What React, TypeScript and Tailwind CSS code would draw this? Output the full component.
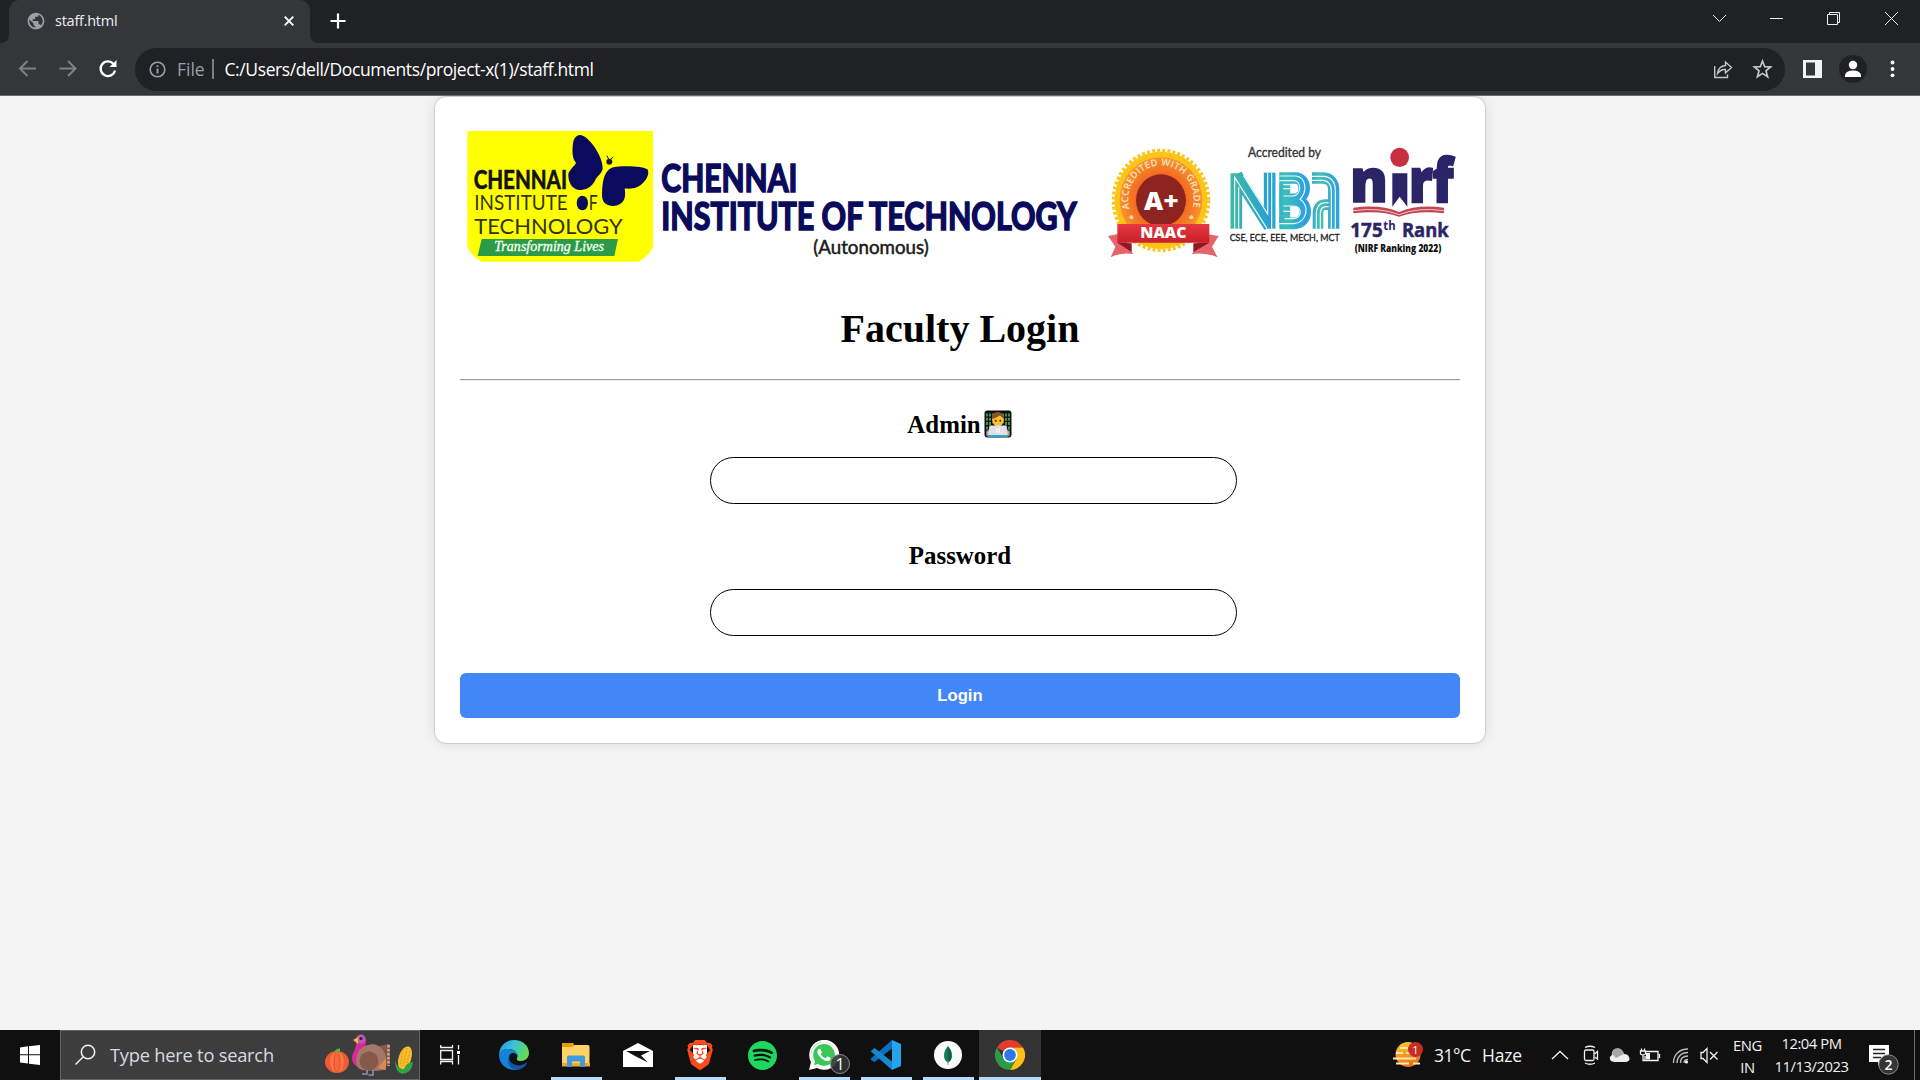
import type { ReactNode } from "react";
import { SiBrave, SiSpotify } from "react-icons/si";
import { FaWhatsapp } from "react-icons/fa";
import { MdPublic } from "react-icons/md";

type LabelProps = {
  x: number;
  y: number;
  w: number;
  size: number;
  children: ReactNode;
  fill?: string;
  weight?: number;
  font?: string;
  italic?: boolean;
  stroke?: number;
};

function Label({ x, y, w, size, children, fill = "#111", weight = 400, font = "Lato, sans-serif", italic, stroke = 0 }: LabelProps) {
  return (
    <text
      x={x}
      y={y}
      textLength={w}
      lengthAdjust="spacingAndGlyphs"
      fontSize={size}
      fontWeight={weight}
      fontFamily={font}
      fontStyle={italic ? "italic" : "normal"}
      fill={fill}
      stroke={stroke ? fill : "none"}
      strokeWidth={stroke}
    >
      {children}
    </text>
  );
}

function Banner() {
  return (
    <svg className="block h-[160px] w-[1000px]" viewBox="460 122 1000 160">
      <defs>
        <linearGradient id="nba" gradientUnits="userSpaceOnUse" x1="420" y1="0" x2="750" y2="0">
          <stop offset="0" stopColor="#42b89f" />
          <stop offset="0.38" stopColor="#279fd8" />
          <stop offset="0.5" stopColor="#3cbfbb" />
          <stop offset="0.7" stopColor="#2b9fe0" />
          <stop offset="0.82" stopColor="#4abfb0" />
          <stop offset="1" stopColor="#2a9ee2" />
        </linearGradient>
        <radialGradient id="seal">
          <stop offset="0.6" stopColor="#f26a21" />
          <stop offset="1" stopColor="#f8932c" />
        </radialGradient>
        <linearGradient id="ribbon" x1="0" y1="0" x2="0" y2="1">
          <stop offset="0" stopColor="#e6383d" />
          <stop offset="1" stopColor="#c9202b" />
        </linearGradient>
      </defs>

      <g transform="translate(430 90) scale(0.33333)">
        <path d="M112 123H669V472Q650 505 625 515H155Q125 500 112 470Z" fill="#ffff00" />
        <path d="M450 135C475 135 520 200 518 236C515 252 500 258 495 272C485 292 465 300 448 300C425 298 414 275 415 252C420 235 435 228 438 218C425 205 427 180 429 160C431 146 438 136 450 135Z" fill="#0a0a5e" />
        <path d="M545 233C575 225 640 228 652 238C663 255 640 285 620 292C605 298 592 295 584 296C590 325 580 345 550 348C525 348 515 335 516 310C517 280 520 245 545 233Z" fill="#0a0a5e" />
        <circle cx="538" cy="215" r="9" fill="#1b1b20" />
        <path d="M536 208L531 197M541 208L550 201" stroke="#1b1b20" strokeWidth="3" />
        <Label x={131} y={296} w={280} size={79} weight={700} stroke={2}>CHENNAI</Label>
        <Label x={133} y={360} w={280} size={61} fill="#33330a">INSTITUTE</Label>
        <ellipse cx="457" cy="339" rx="17" ry="22" fill="#0a0a5e" />
        <Label x={476} y={360} w={27} size={61} fill="#33330a">F</Label>
        <Label x={133} y={433} w={445} size={61} fill="#33330a">TECHNOLOGY</Label>
        <path d="M155 447H564L553 498H143Z" fill="#2c9b48" />
        <Label x={193} y={483} w={329} size={42} fill="#f4fff0" italic font="'Liberation Serif', serif" stroke={1}>Transforming Lives</Label>
      </g>

      <g transform="translate(640 130) scale(0.33333)">
        <Label x={64} y={185} w={408} size={113} weight={700} fill="#0b0b5c" stroke={5}>CHENNAI</Label>
        <Label x={64} y={300} w={1246} size={113} weight={700} fill="#0b0b5c" stroke={5}>INSTITUTE OF TECHNOLOGY</Label>
        <Label x={520} y={371} w={346} size={56} fill="#1a1a1a" stroke={1.5}>(Autonomous)</Label>
      </g>

      <g transform="translate(1090 130) scale(0.33333)">
        <ellipse cx="213" cy="211" rx="139" ry="146" fill="#fcc419" />
        <ellipse cx="213" cy="211" rx="143" ry="150" fill="none" stroke="#fbc61c" strokeWidth="10" strokeDasharray="9 6.4" />
        <ellipse cx="213" cy="210" rx="124" ry="128" fill="url(#seal)" />
        <ellipse cx="213" cy="211" rx="75" ry="78" fill="#8e2420" />
        <path id="sealArc" d="M122 246A98 102 0 1 1 304 246" fill="none" />
        <text fontFamily="'Open Sans', sans-serif" fontSize="28" fontWeight="600" fill="#ffe7c4">
          <textPath href="#sealArc" startOffset="10" textLength="366" lengthAdjust="spacing">ACCREDITED WITH GRADE</textPath>
        </text>
        <circle cx="124" cy="262" r="6" fill="#ffd9a8" />
        <circle cx="304" cy="262" r="6" fill="#ffd9a8" />
        <Label x={162} y={240} w={104} size={76} weight={800} fill="#fff" font="'Open Sans', sans-serif">A+</Label>
        <path d="M54 318L95 310L125 366L130 372Q90 366 62 382L76 350Z" fill="#e4646a" />
        <path d="M386 318L335 310L310 366L305 372Q350 366 383 382L366 350Z" fill="#e4646a" />
        <path d="M82 338L125 340V366ZM358 338L310 340V366Z" fill="#8f1820" />
        <path d="M82 282H358V338H82Z" fill="url(#ribbon)" />
        <Label x={151} y={325} w={138} size={47} weight={800} fill="#fff" font="'Open Sans', sans-serif">NAAC</Label>

        <Label x={474} y={81} w={219} size={38} fill="#333" stroke={1}>Accredited by</Label>
        <g fill="none" stroke="url(#nba)" strokeLinejoin="miter">
          <path d="M439 296V130" strokeWidth="35" />
          <path d="M539 128V296" strokeWidth="35" />
          <path d="M439 134L539 290" strokeWidth="36" />
          <path d="M568 144H616C652 144 652 208 612 208H568M568 212H618C656 214 656 280 612 280H568" strokeWidth="35" />
          <path d="M584 160V280" strokeWidth="33" />
          <path d="M666 144H700Q731 146 731 180V296" strokeWidth="34" />
          <path d="M720 224H706Q684 224 684 250V296" strokeWidth="32" />
        </g>
        <g fill="none" stroke="#eefcff" strokeWidth="3.500">
          <path d="M434 296V142L531 296M446 296V172M533 128V252L460 136M545 128V296" />
          <path d="M568 138H618C650 142 652 186 630 208C660 224 652 278 612 281H568M568 152H612C635 154 635 194 610 198H580M580 176H604M580 164H606M580 228H612C638 232 636 264 610 266H584M580 244H608" />
          <path d="M666 139H702Q736 143 736 182V296M666 151H700Q724 154 724 184V296M716 218H704Q679 220 679 252V296M716 230H706Q691 232 691 252V296" />
        </g>
        <Label x={419} y={333} w={330} size={31} fill="#222" stroke={1}>CSE, ECE, EEE, MECH, MCT</Label>

        <Label x={780} y={216} w={114} size={180} weight={800} fill="#2b2568" font="'Open Sans', sans-serif" stroke={5}>n</Label>
        <path d="M907 130H952V230L929 200L907 230Z" fill="#2b2568" />
        <Label x={958} y={216} w={132} size={180} weight={800} fill="#2b2568" font="'Open Sans', sans-serif" stroke={7}>rf</Label>
        <ellipse cx="929" cy="82" rx="28" ry="29" fill="#c9303f" />
        <path d="M790 233Q870 222 927 246Q985 222 1062 233V250Q985 240 927 260Q870 240 790 250Z" fill="#c34653" />
        <path d="M790 242Q870 231 927 254Q985 231 1062 242" fill="none" stroke="#f2c6cb" strokeWidth="3" />
        <Label x={781} y={321} w={97} size={60} weight={700} fill="#2b2568" font="'Open Sans', sans-serif" stroke={1.5}>175</Label>
        <Label x={880} y={301} w={37} size={36} weight={700} fill="#2b2568" font="'Open Sans', sans-serif">th</Label>
        <Label x={936} y={321} w={140} size={60} weight={700} fill="#2b2568" font="'Open Sans', sans-serif" stroke={1.5}>Rank</Label>
        <Label x={794} y={366} w={260} size={30} weight={800} font="'Open Sans', sans-serif">(NIRF Ranking 2022)</Label>
      </g>
    </svg>
  );
}

function TechnologistEmoji() {
  return (
    <svg className="ml-[3px] h-[28px] w-[28px]" viewBox="0 0 28 28">
      <rect x="0.500" y="0.500" width="27" height="27" rx="3" fill="#0c0f0c" />
      <path d="M3 3.500v22M6 3.500v22M9 3.500v10M19 3.500v10M22 3.500v22M25 3.500v22" stroke="#4fa85c" strokeWidth="1.700" strokeDasharray="3 1.300" />
      <path d="M2 25Q2 19 8 18H20Q26 19 26 25Q25 27 23 27H5Q3 27 2 25Z" fill="#8f6bd9" />
      <ellipse cx="14" cy="10" rx="5.800" ry="6.500" fill="#fcbf2e" />
      <path d="M8 9Q7 2 14 2Q21 3 20 9Q18 7 16 5.500Q12 8 8 9Z" fill="#8a5028" />
      <circle cx="11.700" cy="10.700" r="1" fill="#442b1c" />
      <circle cx="16.300" cy="10.700" r="1" fill="#442b1c" />
      <circle cx="5" cy="23" r="2" fill="#fcbf2e" />
      <circle cx="23" cy="23" r="2" fill="#fcbf2e" />
      <path d="M5.500 15.500H22.500L23.500 25.500H4.500Z" fill="#dfe1e6" />
      <path d="M4.500 25H23.500V27H4.500Z" fill="#21a9d6" />
      <path d="M12 18.500h1.700v1.700H12zM14.300 18.500H16v1.700h-1.700zM12 20.800h1.700v1.700H12zM14.300 20.800H16v1.700h-1.700z" fill="#f8f8fa" />
    </svg>
  );
}

function TabStrip() {
  return (
    <div className="flex h-[43px] bg-[#202124]">
      <div className="flex w-[9px] items-end">
        <svg className="h-[9px] w-[9px]" viewBox="0 0 9 9">
          <path d="M0 9Q9 9 9 0V9Z" fill="#35363a" />
        </svg>
      </div>
      <div className="flex h-[43px] w-[301px] items-center rounded-t-[10px] bg-[#35363a] pb-px pl-[17px]">
        <MdPublic className="h-[20px] w-[20px] text-[#9aa0a6]" />
        <span className="ml-[9px] w-[64px] font-['Open_Sans',sans-serif] text-[14.500px] tracking-[-0.250px] whitespace-nowrap text-[#eceef0]">
          staff.html
        </span>
        <svg className="ml-[165px] h-[10px] w-[10px]" viewBox="0 0 10 10">
          <path d="M0.700 0.700L9.300 9.300M9.300 0.700L0.700 9.300" stroke="#fff" strokeWidth="1.900" />
        </svg>
      </div>
      <div className="flex w-[10px] items-end">
        <svg className="h-[9px] w-[9px]" viewBox="0 0 9 9">
          <path d="M9 9Q0 9 0 0V9Z" fill="#35363a" />
        </svg>
      </div>
      <svg className="mt-[13px] ml-[9.500px] h-[16px] w-[16px]" viewBox="0 0 16 16">
        <path d="M8 .5V15.500M.5 8H15.500" stroke="#fff" strokeWidth="2.200" />
      </svg>
      <svg className="ml-auto h-[38px] w-[229px]" viewBox="0 0 229 38" fill="none" stroke="#f0f0f0" strokeWidth="1">
        <path d="M22 15L28.500 21.500L35 15" />
        <path d="M79 18.500H92" />
        <path d="M136.500 14.500H146.500V24.500H136.500ZM138.500 14.500V12.500H148.500V22.500H146.500" />
        <path d="M194 12L207 25M207 12L194 25" />
      </svg>
    </div>
  );
}

function Toolbar() {
  return (
    <div className="flex h-[53px] items-center border-b border-[#68696c] bg-[#35363a]">
      <svg className="h-[52px] w-[135px] shrink-0" viewBox="0 0 135 52" fill="none" strokeWidth="2">
        <path d="M36 25.500H20.500M27.500 18L20 25.500L27.500 33" stroke="#7e8084" />
        <path d="M59.500 25.500H75M68 18L75.500 25.500L68 33" stroke="#7e8084" />
        <path d="M113.500 21A7.300 7.300 0 1 0 115 27.500" stroke="#fff" strokeWidth="2.300" />
        <path d="M116.500 17V24H109.500Z" fill="#fff" />
      </svg>
      <div className="flex h-[43px] w-[1650px] items-center rounded-full bg-[#202124] pl-[14px] font-['Open_Sans',sans-serif] text-[17.500px]">
        <svg className="h-[17px] w-[17px]" viewBox="0 0 17 17" fill="none" stroke="#9aa0a6" strokeWidth="1.600">
          <circle cx="8.500" cy="8.500" r="7.300" />
          <path d="M8.500 7.500V12.500M8.500 4.300V6" strokeWidth="1.900" />
        </svg>
        <span className="ml-[11px] w-[27px] text-[#9aa0a6]">File</span>
        <span className="ml-[8px] h-5 w-[1.500px] bg-[#7b7e83]" />
        <span className="ml-[11px] tracking-[-0.400px] whitespace-nowrap text-white">
          C:/Users/dell/Documents/project-x(1)/staff.html
        </span>
        <svg className="mr-[12px] ml-auto h-[22px] w-[60px]" viewBox="0 0 60 22" fill="none" stroke="#c4c7ca" strokeWidth="1.400">
          <path d="M1.700 8V19.500H14.500V16.500M4.500 15.500Q5.500 8 12.500 7.500V4L18.500 9.500L12.500 15V11.500Q8 11 4.500 15.500Z" />
          <path d="M49.500 3L51.700 8.700L57.600 9L53 12.900L54.600 18.700L49.500 15.400L44.400 18.700L46 12.900L41.400 9L47.300 8.700Z" strokeWidth="1.700" />
        </svg>
      </div>
      <svg className="h-[52px] w-[135px] shrink-0" viewBox="1785 43 135 52">
        <path d="M1803 60H1822V78H1803ZM1806 62.500V75.500H1815V62.500Z" fill="#f1f3f4" fillRule="evenodd" />
        <circle cx="1853" cy="69" r="14" fill="#202124" />
        <circle cx="1853" cy="65" r="4.200" fill="#fff" />
        <path d="M1845 77V75Q1846 70.500 1853 70.500T1861 75V77Z" fill="#fff" />
        <circle cx="1892.500" cy="62.500" r="1.900" fill="#fff" />
        <circle cx="1892.500" cy="69" r="1.900" fill="#fff" />
        <circle cx="1892.500" cy="75.300" r="1.900" fill="#fff" />
      </svg>
    </div>
  );
}

function LoginCard() {
  return (
    <form className="mx-auto flex h-[648px] w-[1052px] flex-col rounded-[12px] border border-[#ccc] bg-white px-[25px] pt-[25px] font-['Liberation_Serif',serif] text-black shadow-[0_0_12px_rgba(0,0,0,0.1)]">
      <Banner />
      <h1 className="mt-[24px] text-center text-[40px] leading-[46px] font-bold">Faculty Login</h1>
      <hr className="mt-[27px] h-[2px] border-t border-b border-t-[#9a9a9a] border-b-[#eee]" />
      <h3 className="mt-[29px] flex h-[28px] items-center justify-center pr-[1px] text-[24.900px] font-bold">
        <span className="pt-[2px]">Admin</span>
        <TechnologistEmoji />
      </h3>
      <input className="mt-[19px] ml-[250px] h-[47px] w-[527px] rounded-[25px] border border-black px-5 outline-none" />
      <h3 className="mt-[38px] text-center text-[24.900px] leading-[28px] font-bold">Password</h3>
      <input type="password" className="mt-[19px] ml-[250px] h-[47px] w-[527px] rounded-[25px] border border-black px-5 outline-none" />
      <button type="button" className="mt-[37px] h-[45px] w-[1000px] rounded-[6px] bg-[#4287f5] font-['Liberation_Sans',sans-serif] text-[16.670px] font-bold text-white">
        Login
      </button>
    </form>
  );
}

function SearchBox() {
  return (
    <div className="flex h-[50px] w-[360px] items-center border border-[#656565] bg-[#3d3d3d]">
      <svg className="ml-[14px] h-[22px] w-[22px] shrink-0" viewBox="0 0 22 22" fill="none" stroke="#f2f2f2" strokeWidth="1.500">
        <circle cx="13" cy="8" r="6.700" />
        <path d="M8 13L.5 20.500" />
      </svg>
      <span className="ml-[13px] w-[166px] shrink-0 font-['Open_Sans',sans-serif] text-[18.300px] tracking-[-0.230px] whitespace-nowrap text-[#d6dbe0]">
        Type here to search
      </span>
      <svg className="ml-[46px] h-[46px] w-[94px] shrink-0" viewBox="322 1032 94 46">
        <ellipse cx="337" cy="1062" rx="12" ry="11" fill="#ee5b31" />
        <ellipse cx="337" cy="1062" rx="7" ry="10.500" fill="#ff7648" />
        <ellipse cx="337" cy="1062" rx="3" ry="10.500" fill="#fa663a" stroke="#d9472c" strokeWidth=".8" />
        <path d="M336 1053Q336 1050 340 1050" stroke="#6faa35" strokeWidth="3" fill="none" />
        <path d="M372 1048L388 1044H390V1064L380 1068Z" fill="#7f5a48" />
        <path d="M388.500 1045V1066" stroke="#e0a47b" strokeWidth="2.500" strokeDasharray="2.500 1.500" />
        <path d="M357 1041Q357 1035 361 1035Q367 1036 366 1043Q363 1050 366 1056L361 1068Q351 1066 352 1056Q356 1048 357 1041Z" fill="#d9279a" />
        <circle cx="361" cy="1039" r="4.500" fill="#b85bb5" />
        <circle cx="361" cy="1038.500" r="1.500" fill="#2e2035" />
        <path d="M358 1037L353 1040L358 1044Z" fill="#f2b53d" />
        <path d="M356 1061Q356 1046 373 1044Q385 1046 386 1060L386 1069Q380 1072 362 1070Q356 1068 356 1061Z" fill="#a57767" />
        <path d="M378 1068L386 1058V1070Z" fill="#d98952" />
        <circle cx="369" cy="1061" r="9.500" fill="#865849" />
        <path d="M367 1070V1074H362M373 1070V1075H368.500" stroke="#9a8aa5" strokeWidth="1.600" fill="none" />
        <ellipse cx="405" cy="1058" rx="6.300" ry="12" transform="rotate(18 405 1058)" fill="#f7bd2c" />
        <path d="M403 1049L400 1066M407 1048L403 1066M410 1051L406 1066" stroke="#dc9a1b" strokeWidth="1" strokeDasharray="2 1.500" />
        <path d="M395 1060Q398 1070 404 1069Q407 1062 413 1062Q412 1073 402 1074Q395 1072 395 1060Z" fill="#2fa346" />
      </svg>
    </div>
  );
}

function AppSlot({ children, open, active }: { children: ReactNode; open?: boolean; active?: boolean }) {
  return (
    <div className={`flex h-[50px] w-[62px] flex-col items-center ${active ? "bg-[#333]" : ""}`}>
      <div className="flex h-[47px] items-center pt-[3px]">{children}</div>
      {open && <div className={`h-[3px] bg-[#b5dcfa] ${active ? "w-full" : "w-[51px]"}`} />}
    </div>
  );
}

function EdgeIcon() {
  return (
    <svg className="h-[30px] w-[30px]" viewBox="0 0 30 30">
      <defs>
        <linearGradient id="edgeTop" x1="0" y1="0" x2="1" y2="0.400">
          <stop offset="0" stopColor="#1c8fd6" />
          <stop offset="0.450" stopColor="#36bfe0" />
          <stop offset="1" stopColor="#66d956" />
        </linearGradient>
      </defs>
      <path d="M0 14C1 5 7 0 15 0C24 0 30 6 30 13C30 18 26 21 22 21C19 21 17 20 18 18C20 15 17 10 11 9C6 8.500 2 10.500 0 14Z" fill="url(#edgeTop)" />
      <path d="M0 15C1 10 6 8.500 11 9.200C16 10 19 13 18.500 16C17 13 13 11.500 10.500 15C8 20 13 28 19 29.400C8 32 0 24 0 15Z" fill="#1283d8" />
      <path d="M11 14C8 21 14 26 21 25.500C25 25 27.500 22 28.300 23C26 27.500 21 30 17 30C10 29 7 21 11 14Z" fill="#12569f" />
    </svg>
  );
}

function ExplorerIcon() {
  return (
    <svg className="h-[24px] w-[28px]" viewBox="0 0 28 24">
      <path d="M0 0H11L13 3V6H0Z" fill="#e29c0c" />
      <path d="M0 4H10L13 2H26Q27.500 2 27.500 4V23H0Z" fill="#fed265" />
      <path d="M0 20H28V23.500H0Z" fill="#e9ab28" />
      <path d="M5 24V14Q5 12.500 7 12.500H21Q23 12.500 23 14V24H18V18.500H10V24Z" fill="#4299dc" />
    </svg>
  );
}

function MailIcon() {
  return (
    <svg className="h-[24px] w-[30px]" viewBox="0 0 30 24">
      <path d="M0 8L15 0L30 8V24H0Z" fill="#fff" />
      <path d="M3 8H27L18 12.500L25 19.500L13 13.500Z" fill="#101010" />
    </svg>
  );
}

function VsCodeIcon() {
  return (
    <svg className="h-[30px] w-[30px]" viewBox="0 0 30 30">
      <path d="M21 0L30 4V26L21 30Z" fill="#24a3ee" />
      <path d="M21 0V8.500L3.500 22L0 20V18.500Z" fill="#0b70b8" />
      <path d="M0 11L3.500 8L21 21.500V30L0 11.500Z" fill="#1688d0" />
    </svg>
  );
}

function ChromeIcon() {
  return (
    <svg className="h-[30px] w-[30px]" viewBox="0 0 30 30">
      <path d="M15 15L2 7.500A15 15 0 0 1 28 7.500H15Z" fill="#e33b2e" />
      <path d="M15 7.500H28A15 15 0 0 1 15 30L21.500 18.800Z" fill="#fbc116" />
      <path d="M2 7.500A15 15 0 0 0 15 30L21.500 18.800L8.500 18.800Z" fill="#2c9b48" />
      <circle cx="15" cy="15" r="7.500" fill="#fff" />
      <circle cx="15" cy="15" r="5.900" fill="#2b78ea" />
    </svg>
  );
}

function Tray() {
  return (
    <div className="ml-auto flex h-[50px] items-center font-['Open_Sans',sans-serif] text-[#f2f2f2]">
      <svg className="mb-[3px] h-[30px] w-[32px]" viewBox="0 0 32 30">
        <defs>
          <linearGradient id="sun" x1="0" y1="0" x2="0.300" y2="1">
            <stop offset="0" stopColor="#ffd02a" />
            <stop offset="1" stopColor="#ef7217" />
          </linearGradient>
        </defs>
        <circle cx="15" cy="15.500" r="12.500" fill="url(#sun)" />
        <path d="M7 9H16M3 14H10M13 14H18M0 19.500H23M3 24.500H16M20 24.500H27" stroke="#ffe6b5" strokeWidth="1.900" />
        <circle cx="22.500" cy="10.500" r="7.500" fill="#c62b24" />
        <text x="22.500" y="14.500" fontSize="11" textAnchor="middle" fill="#fff">1</text>
      </svg>
      <span className="ml-[9px] w-[48px] text-[17.500px] tracking-[-0.500px] whitespace-nowrap">31°C</span>
      <span className="w-[68px] text-[17.500px] tracking-[-0.200px]">Haze</span>
      <svg className="h-[50px] w-[176px]" viewBox="1550 1030 176 50" fill="none" stroke="#f2f2f2" strokeWidth="1.300">
        <path d="M1552 1059L1560 1051.500L1568 1059" />
        <rect x="1584.500" y="1050" width="9.500" height="10.500" rx="1.500" />
        <path d="M1594.500 1054L1597.500 1051.500V1059L1594.500 1057M1585 1047.500Q1590 1045 1595 1047.500M1585 1063Q1590 1065.500 1595 1063" />
        <path d="M1614 1062H1626Q1631 1061 1629 1057Q1628 1054 1624 1054Q1620 1047 1614 1050Q1611 1052 1612 1055Q1608 1057 1611 1061Z" fill="#eee" stroke="none" />
        <path d="M1612 1054Q1612 1048 1618 1048Q1623 1049 1624 1054L1616 1058Z" fill="#a7a7a7" stroke="none" />
        <path d="M1645 1051.500H1658V1060.500H1645V1056M1659.500 1054V1058M1640.500 1051H1645.500V1054Q1643 1056 1640.500 1054ZM1641.500 1048.500V1051M1644.500 1048.500V1051M1643 1055V1060.500H1645" />
        <path d="M1646 1053H1650V1059.500H1646Z" fill="#f2f2f2" stroke="none" />
        <path d="M1673.500 1063C1673.500 1055 1679 1049 1688 1049M1677 1063C1677 1057 1681 1052.500 1688 1052.500M1680.500 1063C1680.500 1059 1683 1056 1688 1056M1684 1063C1684 1061 1685 1059.500 1688 1059.500" stroke="#bdbdbd" />
        <circle cx="1686.500" cy="1062" r="1.500" fill="#fff" stroke="none" />
        <path d="M1701 1052.500H1703L1707 1048.500V1062.500L1703 1058.500H1701ZM1710 1052L1717.500 1059.500M1717.500 1052L1710 1059.500" />
      </svg>
      <div className="flex w-[43px] flex-col items-center pt-px text-[14.800px] leading-[22px] tracking-[-0.400px]">
        <span>ENG</span>
        <span>IN</span>
      </div>
      <div className="flex w-[85px] flex-col items-center text-[14.800px] leading-[23px] tracking-[-0.450px] whitespace-nowrap">
        <span>12:04 PM</span>
        <span>11/13/2023</span>
      </div>
      <svg className="h-[50px] w-[66px]" viewBox="1854 1030 66 50">
        <path d="M1869 1045H1889V1062H1882L1878 1066V1062H1869Z" fill="#fff" />
        <path d="M1873 1049.500H1885M1873 1053.500H1885M1873 1057.500H1881" stroke="#222" strokeWidth="1.400" />
        <circle cx="1888.500" cy="1064.500" r="9.700" fill="#353535" stroke="#8a8a8a" strokeWidth="1" />
        <text x="1888.500" y="1069.500" fontSize="14" fontWeight="600" textAnchor="middle" fill="#fff">2</text>
        <path d="M1914.500 1030V1080" stroke="#6c6c6c" />
      </svg>
    </div>
  );
}

function Taskbar() {
  return (
    <div className="flex h-[50px] bg-[#101010]">
      <div className="flex w-[60px] items-center justify-center">
        <svg className="h-[20px] w-[20px]" viewBox="0 0 20 20" fill="#fff">
          <path d="M0 2.500L8 1.300V9.300H0ZM9 1.200L20 0V9.300H9ZM0 10.300H8V18.600L0 17.500ZM9 10.300H20V20L9 18.800Z" />
        </svg>
      </div>
      <SearchBox />
      <div className="flex w-[63px] items-center pl-[20px]">
        <svg className="h-[20px] w-[21px]" viewBox="0 0 21 20" fill="none" stroke="#f2f2f2" strokeWidth="1.300">
          <path d="M.7 5.500H12.500V14.500H.7ZM.7 0V2.500H12.500V0M.7 19.500V16.500H12.500V19.500M18.500 0V4.500M18.500 10V19.500" />
          <rect x="17" y="6" width="3" height="3" fill="#fff" stroke="none" />
        </svg>
      </div>
      <AppSlot><EdgeIcon /></AppSlot>
      <AppSlot open><ExplorerIcon /></AppSlot>
      <AppSlot><MailIcon /></AppSlot>
      <AppSlot open>
        <div className="relative flex h-[30px] w-[30px] items-center justify-center">
          <div className="h-[20px] w-[14px] rounded-b-full bg-white" />
          <SiBrave className="absolute h-[30px] w-[30px] text-[#fb4a1e]" />
        </div>
      </AppSlot>
      <AppSlot><SiSpotify className="h-[29px] w-[29px] text-[#1ed760]" /></AppSlot>
      <AppSlot open>
        <div className="relative h-[30px] w-[30px]">
          <svg className="h-[30px] w-[30px]" viewBox="0 0 30 30">
            <path d="M0 30L2 22A15 15 0 1 1 8 28Z" fill="#fff" />
            <path d="M2.500 27.500L4 22A12.800 12.800 0 1 1 8.500 26Z" fill="#3cc656" />
          </svg>
          <FaWhatsapp className="absolute top-0 left-0 h-[30px] w-[30px] text-white" />
          <span className="absolute top-[14px] left-[21px] flex h-[20px] w-[20px] items-center justify-center rounded-full border border-[#8d8d8d] bg-[#333]/90 font-['Open_Sans',sans-serif] text-[16px] text-white">
            1
          </span>
        </div>
      </AppSlot>
      <AppSlot open><VsCodeIcon /></AppSlot>
      <AppSlot open>
        <svg className="h-[28px] w-[28px]" viewBox="0 0 28 28">
          <circle cx="14" cy="14" r="14" fill="#fafafa" />
          <path d="M14 5Q20 12 17 19L14 22Z" fill="#116149" />
          <path d="M14 5Q8 12 11 19L14 22Z" fill="#13795b" />
          <path d="M14 20V24" stroke="#7aa898" />
        </svg>
      </AppSlot>
      <AppSlot open active><ChromeIcon /></AppSlot>
      <Tray />
    </div>
  );
}

export default function App() {
  return (
    <div className="flex h-[1080px] w-[1920px] flex-col overflow-hidden bg-[#f4f4f4]">
      <TabStrip />
      <Toolbar />
      <main className="h-[934px] overflow-hidden">
        <LoginCard />
      </main>
      <Taskbar />
    </div>
  );
}
